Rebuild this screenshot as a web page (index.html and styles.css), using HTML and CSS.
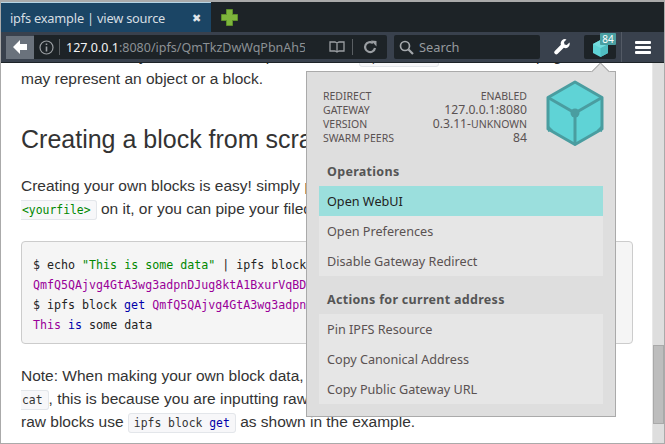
FILE: index.html
```html
<!DOCTYPE html>
<html lang="en">
<head>
<meta charset="utf-8">
<title>ipfs example | view source</title>
<link rel="stylesheet" href="styles.css">
</head>
<body>
<div class="window">
  <div class="tabbar">
    <div class="tab"><span class="tab-title">ipfs example | view source</span><span class="tab-close">✖</span></div>
    <svg class="newtab" width="17" height="17" viewBox="0 0 17 17"><path d="M5.500 .5h6v5h5v6h-5v5h-6v-5h-5v-6h5z" fill="#7eb53c" stroke="#5d8f2a"/></svg>
  </div>
  <div class="navbar">
    <button class="back"><svg width="16" height="14" viewBox="0 0 16 14"><path d="M8 0 1 7l7 7V10h7V4H8z" fill="#fff"/></svg></button>
    <div class="urlbar">
      <svg class="info" width="15" height="15" viewBox="0 0 15 15"><circle cx="7.500" cy="7.500" r="6.500" fill="none" stroke="#9a9ea2" stroke-width="1.200"/><path d="M7.500 3.500v1.600M7.500 6.500v5" stroke="#9a9ea2" stroke-width="1.600"/></svg>
      <i class="sep"></i>
      <div class="url"><span class="url-host">127.0.0.1</span>:8080/ipfs/QmTkzDwWqPbnAh5YiV5VwcTLnGdwSNsNTn2aDxdXBFca7D</div>
      <svg class="book" width="16" height="12" viewBox="0 0 16 12"><path d="M1 1h5l2 1 2-1h5v9h-5l-2 1-2-1H1z M8 2v9" fill="none" stroke="#9a9ea2" stroke-width="1.300"/></svg>
      <i class="sep"></i>
      <svg class="reload" width="14" height="14" viewBox="0 0 14 14"><path d="M12 8a5 5 0 1 1-2-5" fill="none" stroke="#9a9ea2" stroke-width="2.200"/><path d="M8 .5 13.500 1v5.500z" fill="#9a9ea2"/></svg>
    </div>
    <div class="searchbar">
      <svg width="15" height="15" viewBox="0 0 15 15"><circle cx="6" cy="6" r="4.500" fill="none" stroke="#a4a8ac" stroke-width="1.700"/><path d="m9.500 9.500 4.500 4.500" stroke="#a4a8ac" stroke-width="2.200"/></svg>
      <span>Search</span>
    </div>
    <svg class="wrench" width="16" height="16" viewBox="0 0 16 16"><path d="M15.500 3.500 12.800 6l-2.300-.6L10 3l2.500-2.600a4.300 4.300 0 0 0-5.600 5.300L.8 12a1.900 1.900 0 0 0 2.900 2.700L9.800 8.800a4.300 4.300 0 0 0 5.700-5.300z" fill="#fff"/></svg>
    <div class="ipfs-btn">
      <svg width="15" height="17" viewBox="0 0 15 17"><path d="M7.500 0 15 4v9l-7.500 4L0 13V4z" fill="#5fd3d6"/><path d="M7.500 8 15 4v9l-7.500 4z" fill="#4fbcc0"/><path d="M7.500 0 15 4 7.500 8 0 4z" fill="#74dcdf"/></svg>
      <span class="badge">84</span>
    </div>
    <i class="nav-sep"></i>
    <div class="menu"><i></i><i></i><i></i></div>
  </div>
  <div class="page">
    <div class="content">
      <p class="clipped">Note that a hash you see in the tab pin of a hash <code class="inline plain">ipfs block</code> it on the web page</p>
      <p>may represent an object or a block.</p>
      <h2>Creating a block from scratch</h2>
      <p>Creating your own blocks is easy! simply put your data<br><code class="inline green cont">&lt;yourfile&gt;</code> on it, or you can pipe your filedata into</p>
      <pre class="codebox"><span class="t">$ echo</span> <span class="str">"This is some data"</span> | ipfs block put
<span class="hash">QmfQ5QAjvg4GtA3wg3adpnDJug8ktA1BxurVqBD8rtgVjM</span>
$ ipfs block <span class="kw">get</span> <span class="hash">QmfQ5QAjvg4GtA3wg3adpnDJug8ktA1BxurVqBD8</span>
<span class="hash">This</span> <span class="kw">is</span> some data</pre>
      <p>Note: When making your own block data, you can't<br><code class="inline plain cont">cat</code>, this is because you are inputting raw data.<br>raw blocks use <code class="inline plain">ipfs block <span class="kw">get</span></code> as shown in the example.</p>
    </div>
    <div class="scrollbar"><div class="thumb"></div></div>
    <div class="popup">
      <i class="arrow"></i>
      <div class="stats">
        <div class="stat-grid">
          <span>Redirect</span><span class="val">Enabled</span>
          <span>Gateway</span><span class="val num">127.0.0.1:8080</span>
          <span>Version</span><span class="val"><span class="num">0.3.11-</span>unknown</span>
          <span>Swarm Peers</span><span class="val num">84</span>
        </div>
        <svg class="cube" width="58" height="66" viewBox="0 0 58 66"><path d="M29 2 56 17.500V49L29 64.500 2 49V17.500z" fill="#5fd3d6" stroke="#4a9da0" stroke-width="3" stroke-linejoin="round"/><path d="M2 17.500 29 33 56 17.500M29 33V64" fill="none" stroke="#4a9da0" stroke-width="3"/><circle cx="29" cy="33" r="4.500" fill="#4a9da0"/><path d="M2 45l5 5-5 2zM56 45l-5 5 5 2z" fill="#4a9da0"/></svg>
      </div>
      <h3>Operations</h3>
      <ul class="actions">
        <li class="active">Open WebUI</li>
        <li>Open Preferences</li>
        <li>Disable Gateway Redirect</li>
      </ul>
      <h3>Actions for current address</h3>
      <ul class="actions">
        <li>Pin IPFS Resource</li>
        <li>Copy Canonical Address</li>
        <li>Copy Public Gateway URL</li>
      </ul>
    </div>
  </div>
</div>
</body>
</html>
```
FILE: styles.css
```css
* { box-sizing: border-box; }
html, body { margin: 0; height: 100%; overflow: hidden; }
i { display: block; font-style: normal; }
.window {
  width: 665px; height: 444px; display: flex; flex-direction: column;
  font-family: "Noto Sans", sans-serif; background: #fff;
  border-left: 1px solid #aaa; border-right: 1px solid #aaa; border-bottom: 1px solid #aaa;
  position: relative;
}
.tabbar { height: 32px; background: #1d2327; display: flex; align-items: center; flex: none; border-top: 2px solid #aaa; }
.tab {
  width: 210px; height: 30px; background: #1b4565; border-top: 1px solid #b5d4e4;
  display: flex; align-items: center; justify-content: space-between; padding: 0 10px 0 9px;
  color: #d6dde2; font-size: 12.8px; letter-spacing: -.2px;
}
.tab-close { font-size: 11px; color: #dfe4e8; }
.newtab { margin-left: 10px; }
.navbar {
  height: 31px; background: #39414d; display: flex; align-items: center; flex: none;
  border-bottom: 1px solid #1d2327; padding-left: 5px; position: relative;
}
.back {
  width: 28px; height: 23px; background: #6a727c; border: 0; padding: 0;
  display: flex; align-items: center; justify-content: center;
}
.urlbar {
  width: 353px; height: 24px; background: #1d2327; display: flex; align-items: center;
  border-radius: 0 2px 2px 0; padding-left: 5px;
}
.sep { width: 1px; height: 16px; background: #5a5f63; flex: none; }
.info { margin-right: 5px; flex: none; }
.url {
  width: 239px; margin-left: 6px; margin-right: 24px; overflow: hidden; white-space: nowrap;
  color: #8c9195; font-size: 12.5px;
}
.url-host { color: #f2f3f4; }
.book { margin-right: 7px; flex: none; }
.reload { margin-left: 10px; flex: none; }
.searchbar {
  width: 146px; height: 24px; margin-left: 7px; background: #1d2327; border-radius: 2px;
  display: flex; align-items: center; gap: 5px; padding-left: 5px; color: #969a9e; font-size: 12.8px;
}
.wrench { margin-left: 14px; flex: none; }
.ipfs-btn {
  width: 32px; height: 24px; margin-left: 14px; background: #1d2327; border-radius: 2px;
  position: relative; display: flex; align-items: center; padding: 3px 0 0 9px;
}
.badge {
  position: absolute; right: 0; top: -2px; width: 16px; height: 12px; background: #4a9ea1;
  color: #fff; font-size: 10px; line-height: 12px; text-align: center; border-radius: 1px;
}
.nav-sep { width: 1px; height: 30px; background: #535a65; margin-left: 5px; }
.menu { margin-left: 13px; display: flex; flex-direction: column; gap: 2px; }
.menu i { width: 16px; height: 3px; background: #fff; border-radius: 1px; }

.page { flex: 1; position: relative; display: flex; overflow: hidden; min-height: 0; }
.content {
  flex: 1; min-width: 0; overflow: hidden; padding: 0 19px 0 20px;
  font-family: "Liberation Sans", Arial, sans-serif; font-size: 15.5px; line-height: 23px; color: #333;
}
.content p { margin: 0; white-space: nowrap; }
.content .clipped { margin-top: -19px; }
.content h2 { margin: 34px 0 20px; font-size: 25px; line-height: 30px; font-weight: 400; white-space: nowrap; }
.inline {
  font-family: "DejaVu Sans Mono", monospace; font-size: 11.4px; line-height: 1; padding: 2px 5px;
  border: 1px solid #e3e6ea; border-radius: 3px; background: #f7f7f9;
}
.cont { padding-left: 1px; border-left: 0; border-radius: 0 3px 3px 0; }
.green { color: #080; }
.content .codebox {
  margin: 21px 0 20px; height: 103px; padding: 13px 11px; background: #f5f5f5;
  border: 1px solid #ccc; border-radius: 4px; overflow: hidden; white-space: pre;
  font-family: "DejaVu Sans Mono", monospace; font-size: 11.65px; line-height: 20px; color: #222;
}
.str { color: #080; }
.hash { color: #909; }
.kw { color: #00a; }

.scrollbar { width: 12px; background: #dedede; flex: none; position: relative; border-left: 1px solid #e8e8e8; }
.thumb { position: absolute; top: 282px; left: 0; right: 0; height: 79px; background: #bdbdbd; border: 1px solid #a9a9a9; }

.popup {
  position: absolute; left: 305px; top: 8px; width: 310px; height: 346px;
  background: #dedede; border: 1px solid #aaa; padding: 0 12px; color: #5a5252;
  font-family: "Noto Sans", sans-serif;
}
.arrow {
  position: absolute; right: 8px; top: -7px; width: 13px; height: 13px; background: #dedede;
  border-left: 1px solid #aaa; border-top: 1px solid #aaa; transform: rotate(45deg);
}
.stats { display: flex; justify-content: space-between; padding-top: 8px; height: 81px; position: relative; }
.stat-grid {
  width: 204px; margin: 9px 0 0 4px; display: grid; grid-template-columns: auto auto;
  justify-content: space-between; grid-auto-rows: 14px; font-size: 10.5px; line-height: 14px; text-transform: uppercase;
}
.val { text-align: right; }
.num { font-size: 12.2px; }
.cube { flex: none; margin-right: -1px; }
.popup h3 { margin: 0; font-size: 12.5px; font-weight: 700; line-height: 18px; padding: 5px 0 0 8px; height: 32px; color: #555; letter-spacing: .3px; }
.stats + h3 { height: 33px; padding-top: 10px; }
.actions + h3 { padding-top: 15px; height: 38px; }
.actions { list-style: none; margin: 0; padding: 0; background: #e6e6e6; font-size: 12.65px; }
.actions li { height: 30px; line-height: 30px; padding-left: 8px; }
.actions .active { background: #9bdfdd; color: #222; }
```
